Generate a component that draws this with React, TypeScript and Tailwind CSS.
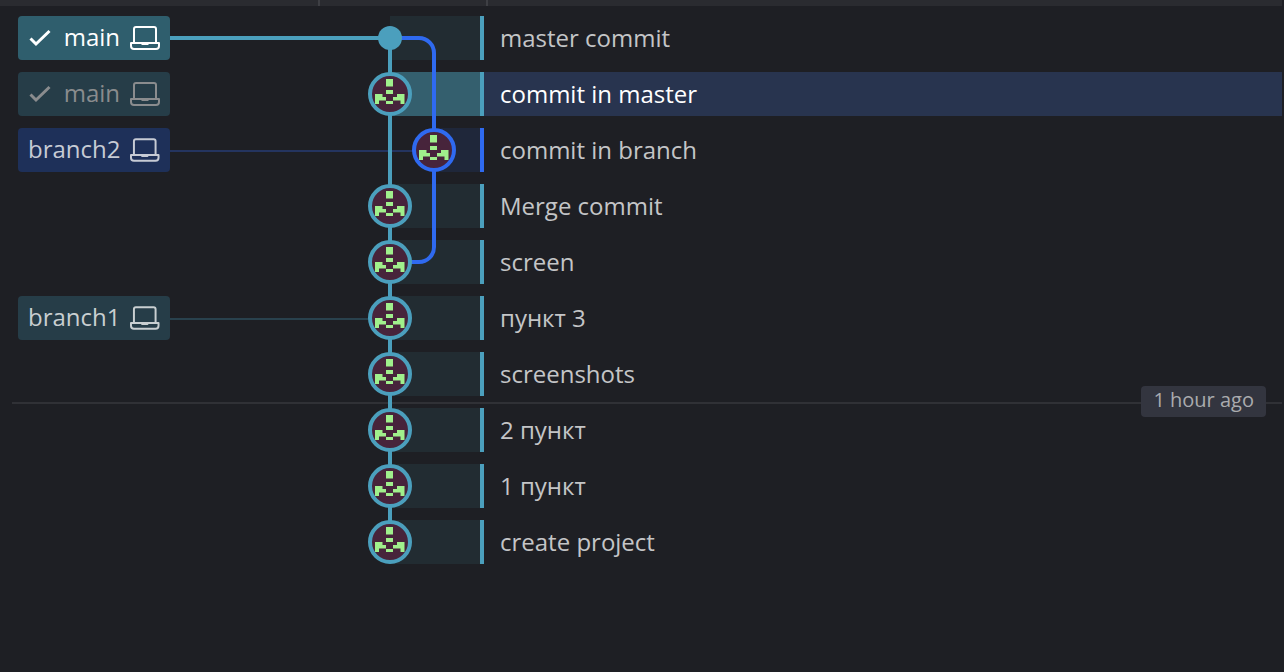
type Lane = "teal" | "blue";

interface Branch {
  name: string;
  current?: boolean;
  box: string;
  ink: string;
}

interface Commit {
  message: string;
  lane: Lane;
  selected?: boolean;
  merge?: boolean;
  branch?: Branch;
}

const commits: Commit[] = [
  {
    message: "master commit",
    lane: "teal",
    merge: true,
    branch: { name: "main", current: true, box: "bg-[#2f5e6d]", ink: "text-white" },
  },
  {
    message: "commit in master",
    lane: "teal",
    selected: true,
    branch: { name: "main", current: true, box: "bg-[#263d48]", ink: "text-[#8a8c8e]" },
  },
  {
    message: "commit in branch",
    lane: "blue",
    branch: { name: "branch2", box: "bg-[#1e3059]", ink: "text-[#c7cbd5]" },
  },
  { message: "Merge commit", lane: "teal" },
  { message: "screen", lane: "teal" },
  {
    message: "пункт 3",
    lane: "teal",
    branch: { name: "branch1", box: "bg-[#263d48]", ink: "text-[#c9cfd1]" },
  },
  { message: "screenshots", lane: "teal" },
  { message: "2 пункт", lane: "teal" },
  { message: "1 пункт", lane: "teal" },
  { message: "create project", lane: "teal" },
];

const ROW_STEP = 56;
const LANE_X = { teal: 220, blue: 264 };
const LANE_COLOR = { teal: "#4b9fbd", blue: "#2f6af0" };

function CheckIcon() {
  return (
    <svg width="24" height="24" viewBox="0 0 24 24" fill="none" stroke="currentColor" strokeWidth="3" aria-hidden="true">
      <path d="M2.5 12.5 8 18 21.5 5" />
    </svg>
  );
}

function LaptopIcon() {
  return (
    <svg width="30" height="24" viewBox="0 0 30 24" fill="none" stroke="currentColor" strokeWidth="2" aria-hidden="true">
      <path d="M4 17V3A2 2 0 0 1 6 1H24A2 2 0 0 1 26 3V17" />
      <path d="M1 17H29V20a3 3 0 0 1-3 3H4a3 3 0 0 1-3-3z" strokeLinejoin="round" />
      <path d="M11 17H19V18L18 19H12L11 18z" fill="currentColor" stroke="none" />
    </svg>
  );
}

function BranchLabel({ branch }: { branch: Branch }) {
  return (
    <button
      type="button"
      className={`flex h-11 w-[152px] items-center rounded px-2.5 text-2xl ${branch.box} ${branch.ink}`}
    >
      {branch.current && <CheckIcon />}
      <span className="mr-2.5 ml-auto pb-0.5">{branch.name}</span>
      <LaptopIcon />
    </button>
  );
}

function Avatar({ x, y, color }: { x: number; y: number; color: string }) {
  return (
    <g transform={`translate(${x} ${y})`}>
      <circle r="20" fill="#47243b" stroke={color} strokeWidth="4" />
      <path
        fill="#a0f08c"
        d="M-4-15H3V-7.500H-4zM-4-4H3V0H-4zM-4 7H3V10H-4zM-15 0H-7.500V3H-4V6.500H-11V10H-15zM14.500 0H7V3H3V6.500H10.500V10H14.500z"
      />
    </g>
  );
}

function Graph() {
  const last = (commits.length - 1) * ROW_STEP + 22;
  return (
    <svg
      className="pointer-events-none absolute top-2.5 left-[170px]"
      width="314"
      height={last + 22}
      fill="none"
      aria-hidden="true"
    >
      <path d="M0 135H264" stroke="#24345f" strokeWidth="2" />
      <path d="M0 303H220" stroke="#29414d" strokeWidth="2" />
      <path d={`M0 22H220V${last}`} stroke={LANE_COLOR.teal} strokeWidth="4" />
      <path d="M220 22H249A15 15 0 0 1 264 37V231A15 15 0 0 1 249 246H220" stroke={LANE_COLOR.blue} strokeWidth="4" />
      {commits.map((commit, i) =>
        commit.merge ? (
          <circle key={i} cx={LANE_X[commit.lane]} cy={i * ROW_STEP + 22} r="12" fill={LANE_COLOR.teal} />
        ) : (
          <Avatar key={i} x={LANE_X[commit.lane]} y={i * ROW_STEP + 22} color={LANE_COLOR[commit.lane]} />
        ),
      )}
    </svg>
  );
}

function CommitRow({ commit }: { commit: Commit }) {
  const tint = commit.selected ? "bg-[#345f6e]" : commit.lane === "blue" ? "bg-[#1f273a]" : "bg-[#222c32]";
  const bar = commit.lane === "blue" ? "border-[#2f6af0]" : "border-[#4b9fbd]";
  const start = commit.lane === "blue" ? "ml-[114px]" : "ml-[70px]";
  return (
    <li className="grid h-11 grid-cols-[320px_164px_1fr]">
      <div className="pl-[18px]">{commit.branch && <BranchLabel branch={commit.branch} />}</div>
      <div className={`border-r-4 ${start} ${tint} ${bar}`} />
      <p
        className={`flex items-center pl-4 text-2xl ${commit.selected ? "bg-[#28344f] text-white" : "text-[#c4c5c7]"}`}
      >
        {commit.message}
      </p>
    </li>
  );
}

export default function App() {
  return (
    <main className="min-h-screen bg-[#1e1f24] pr-0.5 font-['Open_Sans',sans-serif]">
      <header className="grid h-1.5 grid-cols-[320px_168px_1fr] bg-[#2a2b30]">
        <div className="border-r-2 border-[#3e3f44]" />
        <div className="border-r-2 border-[#3e3f44]" />
      </header>
      <section className="relative pt-2.5" aria-label="Commit history">
        <div className="absolute inset-x-0 top-[380px] flex items-start pl-3">
          <div className="mt-4 h-0.5 grow bg-[#303136]" />
          <time className="flex h-[31px] items-center rounded bg-[#33353f] px-3 pb-1 text-xl text-[#aaabae]">
            1 hour ago
          </time>
          <div className="mt-4 h-0.5 w-4 bg-[#303136]" />
        </div>
        <ol className="flex flex-col gap-3">
          {commits.map((commit) => (
            <CommitRow key={commit.message} commit={commit} />
          ))}
        </ol>
        <Graph />
      </section>
    </main>
  );
}
